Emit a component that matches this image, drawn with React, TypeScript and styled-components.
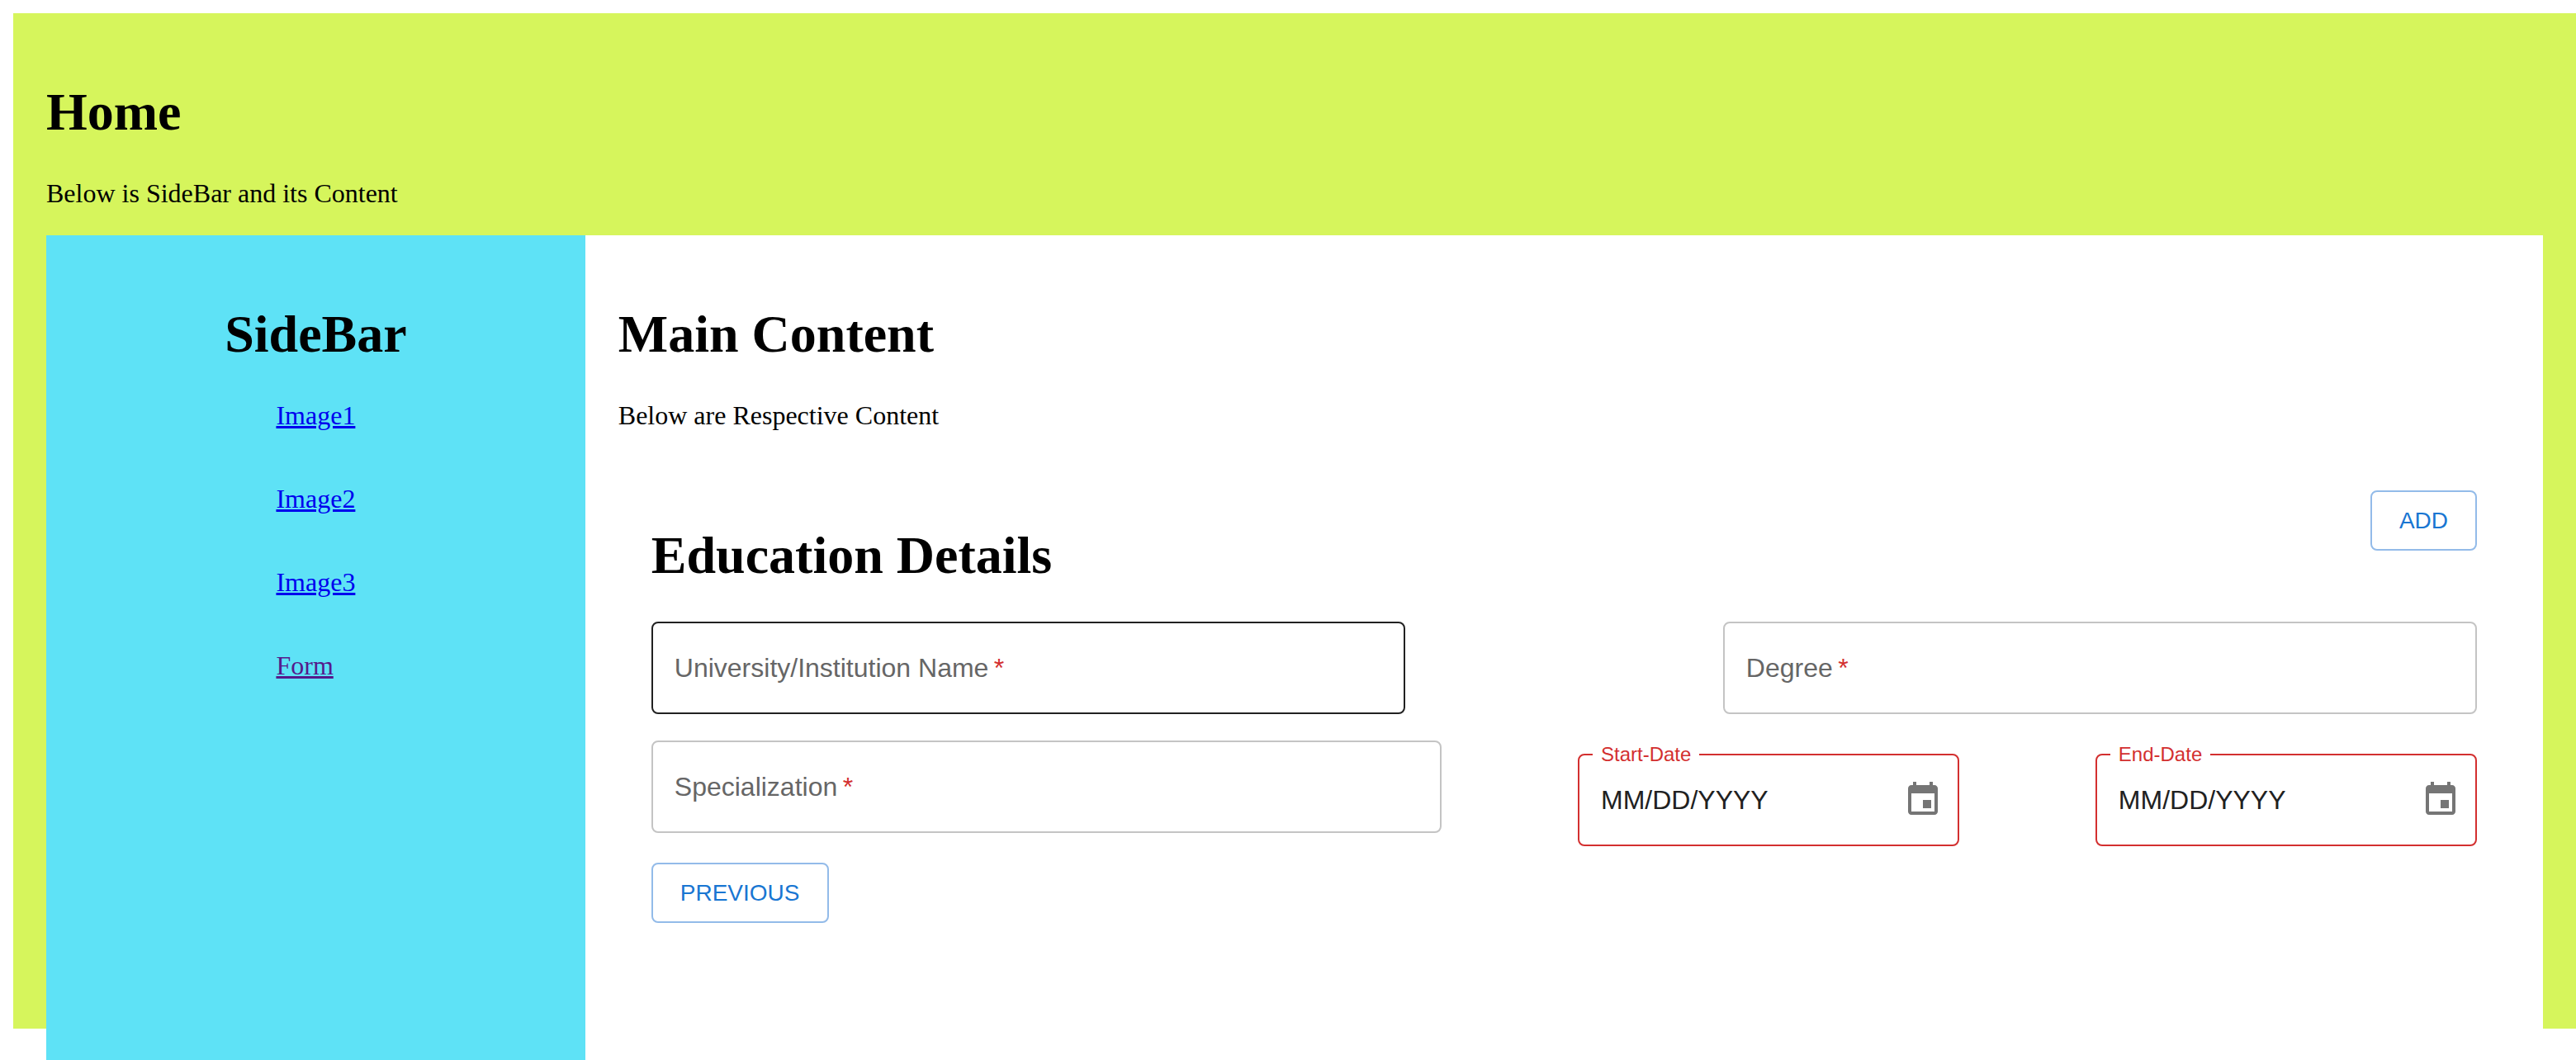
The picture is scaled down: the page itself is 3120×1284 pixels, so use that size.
import React, { useState } from "react";
import styled, { createGlobalStyle } from "styled-components";

const serif = `"Liberation Serif", "Times New Roman", serif`;
const sans = `"Liberation Sans", Helvetica, Arial, sans-serif`;

const GlobalStyle = createGlobalStyle`
  *, *::before, *::after { box-sizing: border-box; }
  body {
    margin: 0;
    background: #fff;
    color: #000;
    font: 32px/37px ${serif};
  }
`;

const Page = styled.div`
  min-height: 100vh;
  padding: 16px 0 0 16px;
`;

const Shell = styled.div`
  display: flex;
  flex-direction: column;
  min-height: calc(100vh - 54px);
  padding: 40px 40px 0;
  background: #d6f55c;
`;

const Title = styled.h1`
  font-size: 64px;
  line-height: 74px;
`;

/* The two columns run on past the bottom edge of the shell. */
const Columns = styled.div`
  display: flex;
  flex: 1;
  margin-bottom: -38px;
  background: #fff;
`;

const SideBar = styled.aside`
  display: flex;
  flex: 1;
  flex-direction: column;
  align-items: center;
  padding: 40px;
  background: #5ee2f6;
`;

const LinkList = styled.nav`
  display: flex;
  flex-direction: column;
  align-items: flex-start;
  gap: 64px;
`;

const SideLink = styled.a<{ $seen?: boolean }>`
  color: ${(p) => (p.$seen ? "#551a8b" : "#0000ee")};
  text-decoration-thickness: 3px;
`;

const Main = styled.main`
  flex: 4;
  padding: 40px;
`;

const Form = styled.form`
  padding: 40px;
  font-family: ${sans};
`;

const FormHeader = styled.div`
  display: flex;
  justify-content: space-between;
  align-items: flex-start;
  font-family: ${serif};
`;

const FieldRow = styled.div`
  display: flex;
  justify-content: space-between;
  align-items: flex-start;

  & + & {
    margin-top: 32px;
  }
`;

const OutlinedButton = styled.button`
  min-width: 128px;
  padding: 10px 33px;
  border: 2px solid #93bbe9;
  border-radius: 8px;
  background: transparent;
  color: #1976d2;
  font: 28px/49px ${sans};
  text-transform: uppercase;
  cursor: pointer;
`;

const Actions = styled.div`
  display: flex;
  margin-top: 20px;
`;

const Field = styled.div<{ $width: string }>`
  display: grid;
  align-items: center;
  width: ${(p) => p.$width};

  & > * {
    grid-area: 1 / 1;
  }
`;

const FieldInput = styled.input<{ $strong?: boolean }>`
  width: 100%;
  height: 112px;
  padding: 0 28px;
  border: 2px solid ${(p) => (p.$strong ? "#212121" : "#c4c4c4")};
  border-radius: 8px;
  background: transparent;
  color: #212121;
  font: 32px/46px ${sans};
`;

const FieldLabel = styled.label`
  justify-self: start;
  padding: 0 28px;
  color: #666;
  font-size: 32px;
  line-height: 46px;
  pointer-events: none;
`;

const Asterisk = styled.span`
  color: #d32f2f;
`;

const DateBox = styled.fieldset`
  width: 20.9%;
  min-width: 0;
  margin: 0;
  padding: 0 18px 16px 16px;
  border: 2px solid #d32f2f;
  border-radius: 8px;
`;

const DateLegend = styled.legend`
  padding: 0 10px;
  color: #d32f2f;
  font-size: 24px;
  line-height: 34px;
`;

const DateRow = styled.div`
  display: flex;
  align-items: center;
  height: 76px;
  padding-left: 10px;
`;

const DateInput = styled.input`
  flex: 1;
  min-width: 0;
  padding: 0;
  border: 0;
  background: transparent;
  color: #212121;
  font: 32px/46px ${sans};
`;

const IconButton = styled.button`
  display: flex;
  padding: 0;
  border: 0;
  background: transparent;
  color: #757575;
  cursor: pointer;
`;

function CalendarIcon() {
  return (
    <svg width="48" height="48" viewBox="0 0 24 24" fill="currentColor" aria-hidden="true">
      <path d="M17 12h-5v5h5v-5zM16 1v2H8V1H6v2H5c-1.11 0-1.99.9-1.99 2L3 19c0 1.1.89 2 2 2h14c1.1 0 2-.9 2-2V5c0-1.1-.9-2-2-2h-1V1h-2zm3 18H5V8h14v11z" />
    </svg>
  );
}

interface TextFieldProps {
  id: string;
  label: string;
  width: string;
  strong?: boolean;
}

function TextField({ id, label, width, strong }: TextFieldProps) {
  const [value, setValue] = useState("");
  return (
    <Field $width={width}>
      {value === "" && (
        <FieldLabel htmlFor={id}>
          {label}
          <Asterisk>&thinsp;*</Asterisk>
        </FieldLabel>
      )}
      <FieldInput
        id={id}
        aria-label={label}
        required
        $strong={strong}
        value={value}
        onChange={(e) => setValue(e.target.value)}
      />
    </Field>
  );
}

function DateField({ id, label }: { id: string; label: string }) {
  const [value, setValue] = useState("MM/DD/YYYY");
  return (
    <DateBox>
      <DateLegend>
        <label htmlFor={id}>{label}</label>
      </DateLegend>
      <DateRow>
        <DateInput id={id} value={value} onChange={(e) => setValue(e.target.value)} />
        <IconButton type="button" aria-label={`Choose ${label}`}>
          <CalendarIcon />
        </IconButton>
      </DateRow>
    </DateBox>
  );
}

const links = [
  { href: "#image1", text: "Image1" },
  { href: "#image2", text: "Image2" },
  { href: "#image3", text: "Image3" },
  { href: "#form", text: "Form", seen: true },
];

export default function App() {
  return (
    <Page>
      <GlobalStyle />
      <Shell>
        <div>
          <Title>Home</Title>
          <p>Below is SideBar and its Content</p>
        </div>
        <Columns>
          <SideBar>
            <Title>SideBar</Title>
            <LinkList>
              {links.map((link) => (
                <SideLink key={link.href} href={link.href} $seen={link.seen}>
                  {link.text}
                </SideLink>
              ))}
            </LinkList>
          </SideBar>
          <Main>
            <Title>Main Content</Title>
            <p>Below are Respective Content</p>
            <Form onSubmit={(e) => e.preventDefault()}>
              <FormHeader>
                <Title>Education Details</Title>
                <OutlinedButton type="button">Add</OutlinedButton>
              </FormHeader>
              <FieldRow>
                <TextField id="university" label="University/Institution Name" width="41.3%" strong />
                <TextField id="degree" label="Degree" width="41.3%" />
              </FieldRow>
              <FieldRow>
                <TextField id="specialization" label="Specialization" width="43.3%" />
                <DateField id="start-date" label="Start-Date" />
                <DateField id="end-date" label="End-Date" />
              </FieldRow>
              <Actions>
                <OutlinedButton type="button">Previous</OutlinedButton>
              </Actions>
            </Form>
          </Main>
        </Columns>
      </Shell>
    </Page>
  );
}
